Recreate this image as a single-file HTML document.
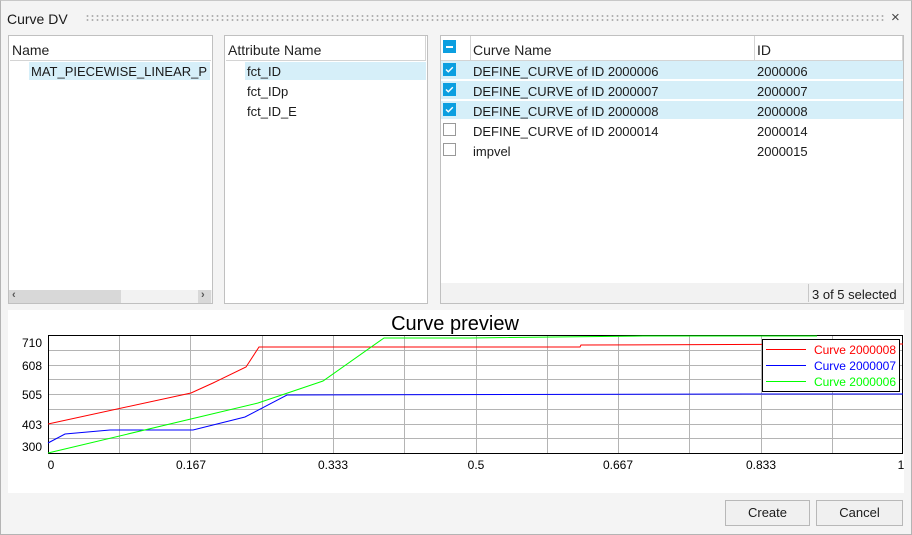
<!DOCTYPE html>
<html><head><meta charset="utf-8"><style>
*{margin:0;padding:0;box-sizing:border-box}
body{width:912px;height:535px;background:#f4f4f4;font-family:"Liberation Sans",sans-serif;font-size:13px;color:#1a1a1a;position:relative;overflow:hidden}
.a{position:absolute}
.frame{left:0;top:0;width:912px;height:535px;border:1px solid #b4b4b4;border-top-color:#c8c8c8}
.panel{background:#fff;border:1px solid #c0c0c0}
.hdr{font-size:14px;color:#222}
.sel{background:#d6eff9}
.cb{width:13px;height:13px;border:1px solid #999;background:#fff}
.cbc{background:#0c9fe0;border-color:#0c9fe0}
.btn{background:#f0f0f0;border:1px solid #b8b8b8;text-align:center;line-height:24px;font-size:13px}
</style></head><body>
<div class="a frame"></div>
<div class="a" style="left:7px;top:11px;font-size:14px">Curve DV</div>
<div class="a" style="left:85px;top:14px;width:800px;height:7px;background-image:radial-gradient(circle,#b0b0b0 0.9px,transparent 1.1px);background-size:5px 4px"></div>
<div class="a" style="left:891px;top:9px;font-size:15px;color:#444">×</div>

<!-- left panel -->
<div class="a panel" style="left:8px;top:35px;width:205px;height:269px"></div>
<div class="a" style="left:10px;top:36px;width:201px;height:25px;border-bottom:1px solid #d4d4d4"></div>
<div class="a hdr" style="left:12px;top:42px">Name</div>
<div class="a sel" style="left:29px;top:62px;width:181px;height:18px"></div>
<div class="a" style="left:31px;top:64px">MAT_PIECEWISE_LINEAR_P</div>
<div class="a" style="left:9px;top:290px;width:203px;height:13px;background:#f2f2f2"></div>
<div class="a" style="left:9px;top:290px;width:112px;height:13px;background:#d8d8d8"></div>
<div class="a" style="left:198px;top:290px;width:13px;height:13px;background:#d8d8d8"></div>
<div class="a" style="left:12px;top:289px;font-size:11px;color:#555;font-weight:bold">‹</div>
<div class="a" style="left:201px;top:289px;font-size:11px;color:#555;font-weight:bold">›</div>

<!-- middle panel -->
<div class="a panel" style="left:224px;top:35px;width:204px;height:269px"></div>
<div class="a" style="left:226px;top:36px;width:200px;height:25px;border-bottom:1px solid #d4d4d4;border-right:1px solid #d4d4d4"></div>
<div class="a hdr" style="left:228px;top:42px">Attribute Name</div>
<div class="a sel" style="left:245px;top:62px;width:181px;height:18px"></div>
<div class="a" style="left:247px;top:64px">fct_ID</div>
<div class="a" style="left:247px;top:84px">fct_IDp</div>
<div class="a" style="left:247px;top:104px">fct_ID_E</div>

<!-- right panel -->
<div class="a panel" style="left:440px;top:35px;width:464px;height:269px"></div>
<div class="a" style="left:441px;top:36px;width:462px;height:25px;border-bottom:1px solid #d4d4d4"></div>
<div class="a" style="left:470px;top:36px;width:1px;height:25px;background:#d4d4d4"></div>
<div class="a" style="left:754px;top:36px;width:1px;height:25px;background:#d4d4d4"></div>
<div class="a" style="left:902px;top:36px;width:1px;height:25px;background:#d4d4d4"></div>
<div class="a cb cbc" style="left:443px;top:40px"><div class="a" style="left:2px;top:5px;width:7px;height:2px;background:#fff"></div></div>
<div class="a hdr" style="left:473px;top:42px">Curve Name</div>
<div class="a hdr" style="left:757px;top:42px">ID</div>
<div class="a sel" style="left:441px;top:61px;width:462px;height:18px"></div>
<div class="a sel" style="left:441px;top:81px;width:462px;height:18px"></div>
<div class="a sel" style="left:441px;top:101px;width:462px;height:18px"></div>
<svg class="a" style="left:443px;top:63px" width="13" height="13"><rect width="13" height="13" fill="#0c9fe0"/><path d="M3 6.5l2.3 2.3 4.5-4.5" stroke="#fff" stroke-width="1.4" fill="none"/></svg>
<svg class="a" style="left:443px;top:83px" width="13" height="13"><rect width="13" height="13" fill="#0c9fe0"/><path d="M3 6.5l2.3 2.3 4.5-4.5" stroke="#fff" stroke-width="1.4" fill="none"/></svg>
<svg class="a" style="left:443px;top:103px" width="13" height="13"><rect width="13" height="13" fill="#0c9fe0"/><path d="M3 6.5l2.3 2.3 4.5-4.5" stroke="#fff" stroke-width="1.4" fill="none"/></svg>
<div class="a cb" style="left:443px;top:123px"></div>
<div class="a cb" style="left:443px;top:143px"></div>
<div class="a" style="left:473px;top:64px">DEFINE_CURVE of ID 2000006</div>
<div class="a" style="left:473px;top:84px">DEFINE_CURVE of ID 2000007</div>
<div class="a" style="left:473px;top:104px">DEFINE_CURVE of ID 2000008</div>
<div class="a" style="left:473px;top:124px">DEFINE_CURVE of ID 2000014</div>
<div class="a" style="left:473px;top:144px">impvel</div>
<div class="a" style="left:757px;top:64px">2000006</div>
<div class="a" style="left:757px;top:84px">2000007</div>
<div class="a" style="left:757px;top:104px">2000008</div>
<div class="a" style="left:757px;top:124px">2000014</div>
<div class="a" style="left:757px;top:144px">2000015</div>
<div class="a" style="left:441px;top:283px;width:462px;height:20px;background:#f2f2f2"></div>
<div class="a" style="left:808px;top:284px;width:1px;height:18px;background:#c8c8c8"></div>
<div class="a" style="left:812px;top:287px">3 of 5 selected</div>

<!-- chart -->
<div class="a" style="left:8px;top:310px;width:896px;height:183px;background:#fff"></div>
<svg class="a" style="left:0;top:0" width="912" height="535" font-family="Liberation Sans, sans-serif">
<text x="455" y="330" font-size="20" text-anchor="middle" fill="#000">Curve preview</text>
<g stroke="#b4b4b4" stroke-width="1">
<path d="M119.5 335v118M190.5 335v118M262.5 335v118M333.5 335v118M404.5 335v118M476.5 335v118M547.5 335v118M618.5 335v118M689.5 335v118M761.5 335v118M832.5 335v118"/>
<path d="M48 350.5h855M48 365.5h855M48 379.5h855M48 394.5h855M48 409.5h855M48 424.5h855M48 438.5h855"/>
</g>
<rect x="48.5" y="335.5" width="854" height="118" fill="none" stroke="#000"/>
<polyline fill="none" stroke="#f00" points="48,424 191,393 213,383 246,367 259,347 580,347 581,345 903,344"/>
<polyline fill="none" stroke="#00f" points="48,443 65,434 110,430 193,430 245,417 287,395 748,394 903,394"/>
<polyline fill="none" stroke="#0f0" points="48,453 258,403 323,381 384,338 470,338 643,336 817,336"/>
<rect x="762.5" y="339.5" width="137" height="52" fill="#fff" stroke="#000"/>
<path d="M766 349.5h40" stroke="#f00"/><path d="M766 365.5h40" stroke="#00f"/><path d="M766 381.5h40" stroke="#0f0"/>
<g font-size="12" text-anchor="end"><text x="896" y="354" fill="#f00">Curve 2000008</text><text x="896" y="370" fill="#00f">Curve 2000007</text><text x="896" y="386" fill="#0f0">Curve 2000006</text></g>
<g font-size="12" fill="#000" text-anchor="end"><text x="42" y="347">710</text><text x="42" y="370">608</text><text x="42" y="399">505</text><text x="42" y="429">403</text><text x="42" y="451">300</text></g>
<g font-size="12" fill="#000" text-anchor="middle"><text x="51" y="469">0</text><text x="191" y="469">0.167</text><text x="333" y="469">0.333</text><text x="476" y="469">0.5</text><text x="618" y="469">0.667</text><text x="761" y="469">0.833</text><text x="901" y="469">1</text></g>
</svg>

<div class="a btn" style="left:725px;top:500px;width:85px;height:26px">Create</div>
<div class="a btn" style="left:816px;top:500px;width:87px;height:26px">Cancel</div>
</body></html>
